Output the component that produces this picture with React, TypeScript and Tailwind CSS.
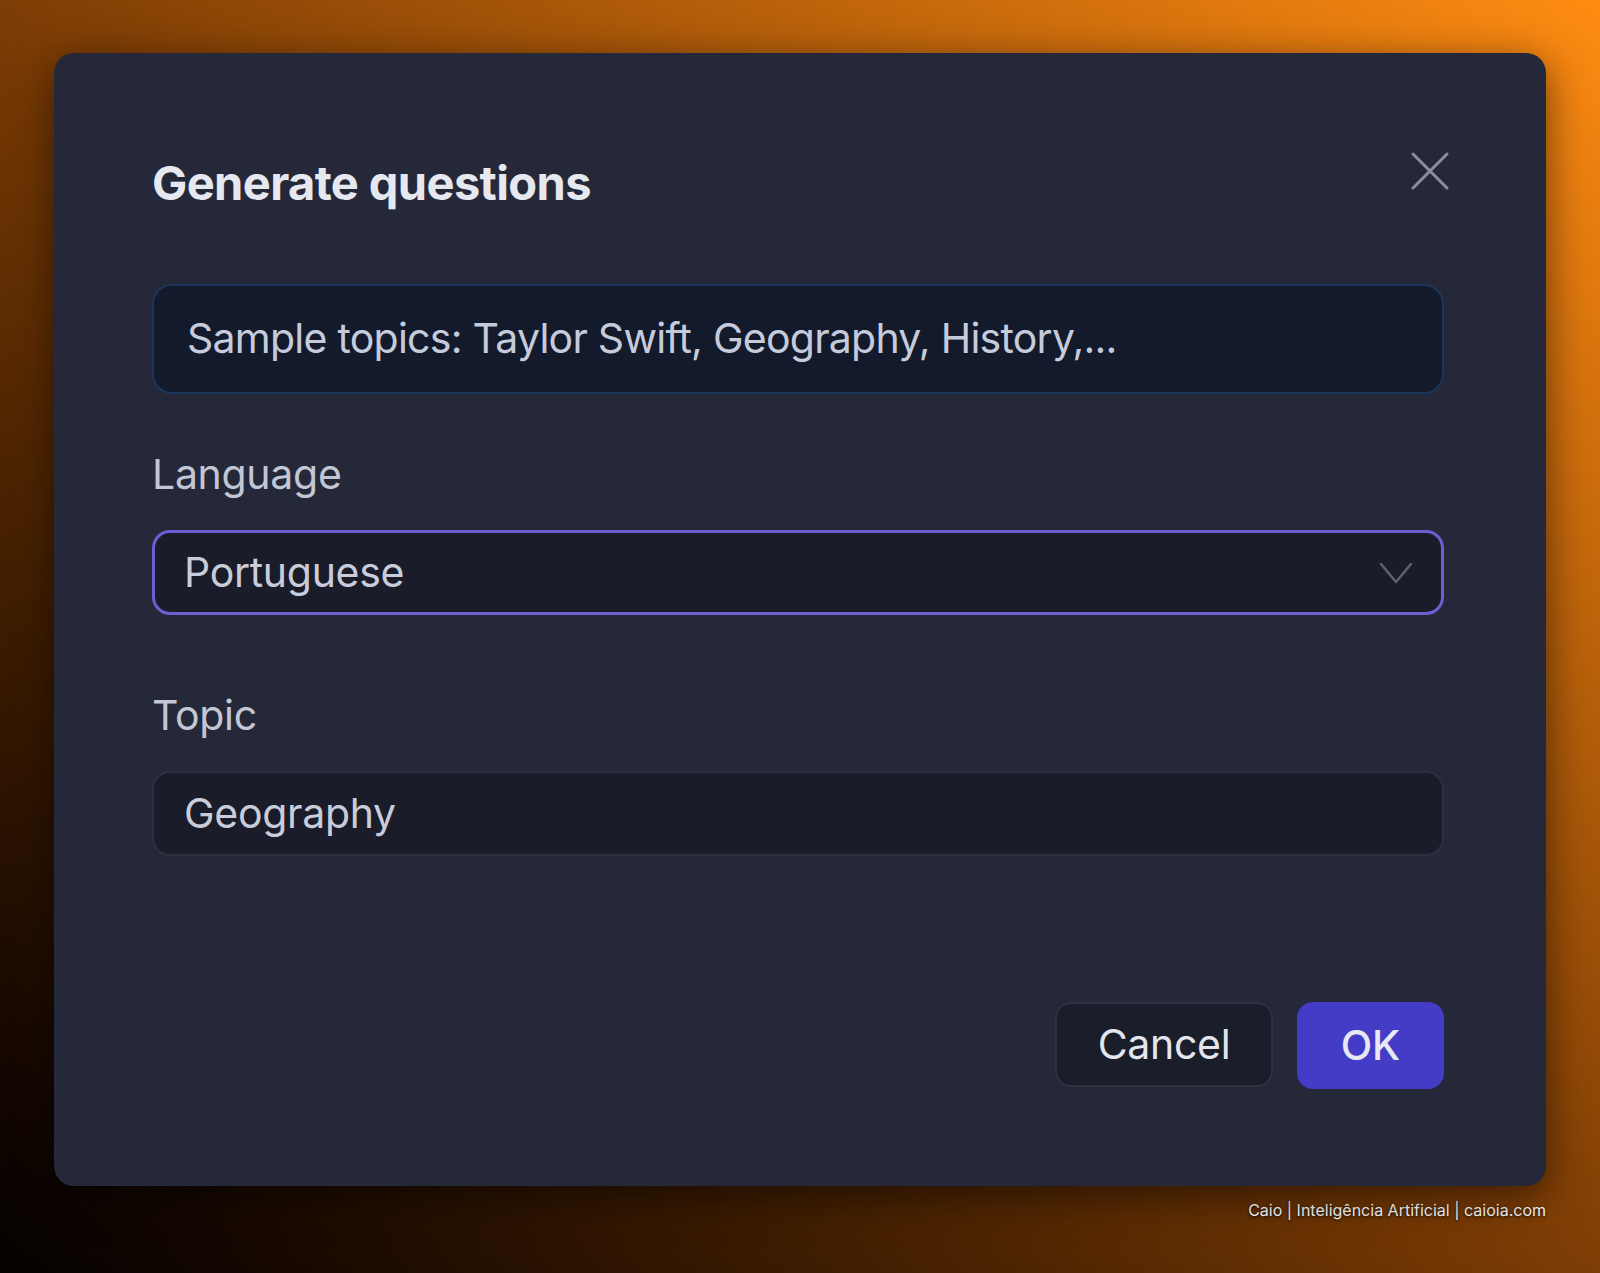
import React from "react";

const font = { fontFamily: "Inter, 'Noto Sans', sans-serif" };

const CloseIcon = () => (
  <svg width="40" height="40" viewBox="0 0 40 40" fill="none">
    <path d="M3 3 L37 37 M37 3 L3 37" stroke="#8b8f9d" strokeWidth="3" strokeLinecap="round" />
  </svg>
);

const Chevron = () => (
  <svg width="34" height="22" viewBox="0 0 34 22" fill="none">
    <path d="M2 2 L17 20 L32 2" stroke="#5d6171" strokeWidth="2.5" strokeLinecap="round" strokeLinejoin="round" />
  </svg>
);

export default function App() {
  return (
    <div
      className="w-full h-[1273px] bg-linear-to-bl from-[#ff8c12] via-[#7e3d05] to-[#050200] pt-[53px] pl-[54px] overflow-hidden"
      style={font}
    >
      <div className="w-[1492px] h-[1133px] bg-[#252839] rounded-[20px] shadow-[0_10px_40px_rgba(0,0,0,0.55)] relative flex flex-col pl-[98px] pr-[102px]">
        {/* Header */}
        <h2 className="mt-[100px] text-[47px] leading-[60px] font-bold text-[#e6e8f0] tracking-[-0.6px]">
          Generate questions
        </h2>
        <button className="absolute top-[98px] left-[1356px]">
          <CloseIcon />
        </button>

        {/* Topics input */}
        <div className="mt-[71px] h-[110px] rounded-[20px] border-2 border-[#1c3559] bg-[#131a2b] flex items-center px-[33px]">
          <span className="text-[41px] text-[#c6cbdc] tracking-[-0.75px]">
            Sample topics: Taylor Swift, Geography, History,...
          </span>
        </div>

        {/* Language */}
        <label className="mt-[55px] text-[41px] leading-[50px] text-[#c3c6d4] tracking-[-0.3px]">Language</label>
        <div className="mt-[31px] h-[85px] rounded-[18px] border-[3px] border-[#6a60d2] bg-[#1a1c29] flex items-center justify-between pl-[29px] pr-[28px]">
          <span className="text-[41px] text-[#c9ccda] tracking-[-0.3px]">Portuguese</span>
          <Chevron />
        </div>

        {/* Topic */}
        <label className="mt-[75px] text-[41px] leading-[50px] text-[#c3c6d4] tracking-[-0.3px]">Topic</label>
        <div className="mt-[31px] h-[85px] rounded-[18px] border-2 border-[#2c3040] bg-[#1a1c29] flex items-center pl-[30px]">
          <span className="text-[41px] text-[#c9ccda] tracking-[-0.3px]">Geography</span>
        </div>

        {/* Actions */}
        <div className="mt-[146px] flex justify-end gap-[24px]">
          <button className="w-[218px] h-[85px] rounded-[16px] border-2 border-[#2d3142] bg-[#1a1d2a] text-[41px] text-[#e4e6ee] tracking-[-0.3px]">
            Cancel
          </button>
          <button className="w-[147px] h-[87px] rounded-[16px] bg-[#443cc7] text-[41px] text-[#e8e8f4] font-medium">
            OK
          </button>
        </div>
      </div>
      <div className="w-[1492px] mt-[12px] text-right text-[16px] text-white [text-shadow:0_1px_3px_rgba(0,0,0,0.9)]" style={font}>
        Caio | Inteligência Artificial | caioia.com
      </div>
    </div>
  );
}
